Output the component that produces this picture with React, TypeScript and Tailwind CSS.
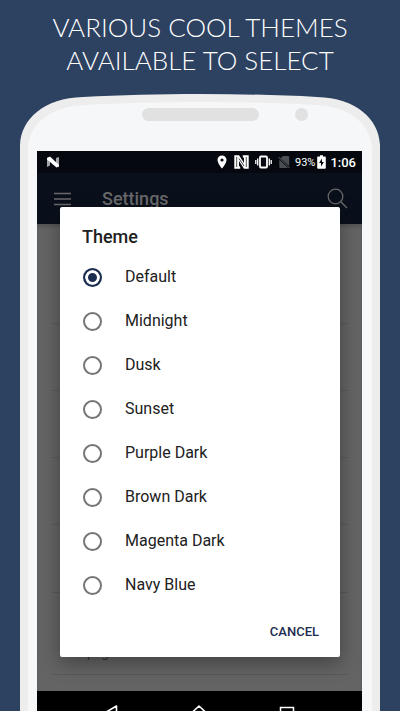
import { useState } from "react";

const themes = [
  "Default",
  "Midnight",
  "Dusk",
  "Sunset",
  "Purple Dark",
  "Brown Dark",
  "Magenta Dark",
  "Navy Blue",
];

function PhoneTop() {
  return (
    <svg className="block w-full h-[57px]" viewBox="0 0 360 57" preserveAspectRatio="none" aria-hidden="true">
      <path d="M0 57V51C1 25 24 4 63 3C100 1 140 0 180 0S260 1 297 3C336 4 359 25 360 51V57Z" fill="#ededed" />
      <path d="M8 57V54C9 31 30 12 65 11C100 9 140 8 180 8S260 9 295 11C330 12 351 31 352 54V57Z" fill="#f6f7f9" />
      <rect x="122" y="14" width="117" height="13" rx="6.5" fill="#e1e1e1" />
      <circle cx="281.5" cy="20.5" r="6.5" fill="#e1e1e1" />
    </svg>
  );
}

function StatusBar() {
  return (
    <div className="flex items-center h-[22px] pl-[9px] pr-1.5 bg-[#05090f] text-white">
      <svg className="w-[14px] h-[12px]" viewBox="0 0 14 12" aria-hidden="true">
        <path d="M1 2l3-1v8.500l-3 1.500zM10 2l3-1v9.500l-3 .5z" fill="#a3a5a7" />
        <path d="M1 2l3-1.500 9 8.500v1.500l-2.500 1L1 3.500z" fill="#fff" />
      </svg>
      <div className="flex items-center ml-auto">
        <svg className="w-[10px] h-[14px]" viewBox="0 0 10 14" aria-hidden="true">
          <path fillRule="evenodd" d="M5 .5A4.500 4.500 0 0 0 .5 5C.5 8.300 5 13.500 5 13.500S9.500 8.300 9.500 5A4.500 4.500 0 0 0 5 .5zM5 3.400a1.600 1.600 0 1 1 0 3.200 1.600 1.600 0 0 1 0-3.200z" fill="#fff" />
        </svg>
        <svg className="w-[15px] h-[14px] ml-[7px]" viewBox="0 0 15 14" aria-hidden="true">
          <path d="M.3.3H5L10 8V3.200L8.800 2V.3h5.900v13.400H10L5 6v4.800L6.200 12v1.700H.3z" fill="#fff" />
          <path d="M2.700 2v10M12.300 2v10" stroke="#05090f" strokeWidth=".7" />
          <path d="M5 3.500l5 7.500" stroke="#05090f" strokeWidth=".8" />
        </svg>
        <svg className="w-[17px] h-[14px] ml-1.5" viewBox="0 0 17 14" fill="none" stroke="#fff" aria-hidden="true">
          <rect x="5" y="1.500" width="7" height="11" rx="1" strokeWidth="1.800" />
          <path d="M2.700 3.500v7M14.300 3.500v7M.8 5v4M16.200 5v4" strokeWidth="1.300" />
        </svg>
        <svg className="w-[12px] h-[14px] ml-1.5" viewBox="0 0 12 14" aria-hidden="true">
          <path d="M5 1h5.500l.7.700V11L2.500 3.300zM1.300 4.500v7.700l.7.800h8z" fill="#4b4e52" />
          <path d="M.5 2l11 11" stroke="#5b5e62" strokeWidth="1" />
        </svg>
        <span className="ml-[5px] text-[11px] leading-none">93%</span>
        <svg className="w-[9px] h-[14px] ml-0.5" viewBox="0 0 9 14" aria-hidden="true">
          <path d="M.8 1.500H3V.3h3v1.200h2.200l.6.600v11l-.6.600H.8l-.6-.6v-11z" fill="#fff" />
          <path d="M5 3.500L2 8h2v3.500L7 7H5z" fill="#05090f" />
        </svg>
        <span className="ml-1 text-[13px] leading-none font-medium">1:06</span>
      </div>
    </div>
  );
}

function AppBar() {
  return (
    <header className="flex items-center h-[51px] pl-4 pr-3.5 bg-[#0a101b] text-[#69696b]">
      <button type="button" aria-label="Menu">
        <svg className="w-[19px] h-[14px]" viewBox="0 0 19 14" stroke="currentColor" strokeWidth="1.600" aria-hidden="true">
          <path d="M1 1.500h17M1 7h17M1 12.500h17" />
        </svg>
      </button>
      <h2 className="ml-[30px] text-lg leading-none font-medium">Settings</h2>
      <button type="button" aria-label="Search" className="ml-auto">
        <svg className="w-[21px] h-[21px]" viewBox="0 0 21 21" fill="none" stroke="currentColor" strokeWidth="1.300" aria-hidden="true">
          <circle cx="8.500" cy="8.500" r="7.300" />
          <path d="M13.800 13.800l6.200 6.200" />
        </svg>
      </button>
    </header>
  );
}

function SettingsList() {
  return (
    <div className="flex-1 pl-[15px] pr-3.5 bg-[#646464] text-[#333333] shadow-[inset_0_3px_3px_rgba(0,0,0,0.15)]">
      <div className="h-[100px] border-b border-[#5a5a5a]" />
      <div className="h-[67px] border-b border-[#5a5a5a]" />
      <div className="h-[67px] border-b border-[#5a5a5a]" />
      <div className="h-[67px] border-b border-[#5a5a5a]" />
      <div className="h-[68px] border-b border-[#5a5a5a]" />
      <div className="flex items-end h-[82px] pb-[11px] pl-[35px] border-b border-[#5a5a5a]">
        <span className="text-[13px] leading-5">page</span>
      </div>
    </div>
  );
}

function ThemeDialog() {
  const [selected, setSelected] = useState("Default");

  return (
    <div
      role="dialog"
      aria-labelledby="theme-title"
      className="absolute top-14 left-[23px] right-[22px] rounded-xs bg-white text-[#212121] shadow-[0_6px_20px_rgba(0,0,0,0.35)]"
    >
      <h3 id="theme-title" className="pt-[18px] pl-[22px] text-lg leading-6 font-medium">Theme</h3>
      <div className="pt-1.5 pl-[23px]">
        {themes.map((theme) => (
          <label key={theme} className="flex items-center gap-[23px] h-11 text-base">
            <input
              type="radio"
              name="theme"
              checked={selected === theme}
              onChange={() => setSelected(theme)}
              className="appearance-none w-[19px] h-[19px] rounded-full border-2 border-[#757575] checked:border-[#1b2d4f] checked:bg-[#1b2d4f] checked:shadow-[inset_0_0_0_3px_white]"
            />
            {theme}
          </label>
        ))}
      </div>
      <div className="flex justify-end pt-[15px] pb-[15px] pr-[21px]">
        <button type="button" className="text-[13px] leading-5 font-medium text-[#1b2d4f]">CANCEL</button>
      </div>
    </div>
  );
}

function NavBar() {
  return (
    <nav className="flex items-start justify-between h-5 pl-[66px] pr-[67px] pt-[14px] overflow-hidden bg-black">
      <button type="button" aria-label="Back" className="shrink-0">
        <svg className="w-4 h-4" viewBox="0 0 16 16" fill="none" stroke="#fff" strokeWidth="1.600" aria-hidden="true">
          <path d="M13.500 1v14L1.500 8z" strokeLinejoin="round" />
        </svg>
      </button>
      <button type="button" aria-label="Home" className="shrink-0">
        <svg className="w-4 h-4" viewBox="0 0 16 16" fill="none" stroke="#fff" strokeWidth="1.600" aria-hidden="true">
          <path d="M8 1l7 6.500V15H1V7.500z" strokeLinejoin="round" />
        </svg>
      </button>
      <button type="button" aria-label="Recent apps" className="shrink-0">
        <svg className="w-4 h-4" viewBox="0 0 16 16" fill="none" stroke="#fff" strokeWidth="1.500" aria-hidden="true">
          <rect x="1.500" y="2.500" width="13" height="13" />
        </svg>
      </button>
    </nav>
  );
}

export default function App() {
  return (
    <main className="flex flex-col min-h-screen bg-[#2d4161] font-[Roboto,sans-serif]">
      <h1 className="pt-[11px] pb-[17px] text-center text-[26px] leading-[33px] font-light text-white font-[Lato,sans-serif]">
        VARIOUS COOL THEMES
        <br />
        AVAILABLE TO SELECT
      </h1>
      <div className="flex flex-col flex-1 mx-5">
        <PhoneTop />
        <div className="flex flex-col flex-1 pl-[9px] pr-[10px] border-x-8 border-[#ededed] bg-[#f6f7f9]">
          <div className="relative flex flex-col flex-1">
            <StatusBar />
            <AppBar />
            <SettingsList />
            <NavBar />
            <ThemeDialog />
          </div>
        </div>
      </div>
    </main>
  );
}
